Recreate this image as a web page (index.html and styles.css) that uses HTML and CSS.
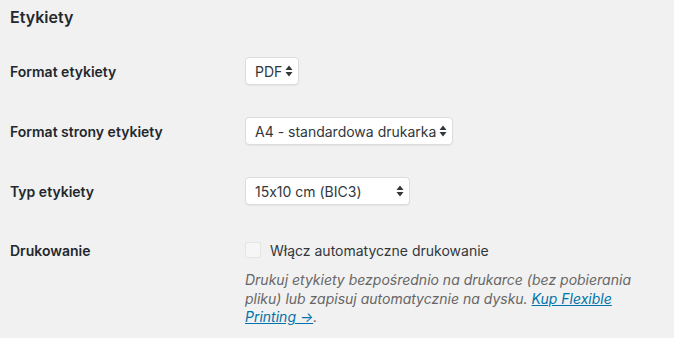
FILE: index.html
```html
<!DOCTYPE html>
<html lang="pl">
<head>
<meta charset="utf-8">
<link rel="stylesheet" href="styles.css">
</head>
<body>
<div class="page">
  <h2 class="title">Etykiety</h2>
  <div class="row">
    <div class="label">Format etykiety</div>
    <div class="field">
      <div class="select"><span>PDF</span>
        <svg class="arrows" width="8" height="12" viewBox="0 0 8 12"><path d="M4 0.5 L7.5 5 H0.5 Z M4 11.5 L7.5 7 H0.5 Z" fill="#32373c"/></svg>
      </div>
    </div>
  </div>
  <div class="row">
    <div class="label">Format strony etykiety</div>
    <div class="field">
      <div class="select"><span>A4 - standardowa drukarka</span>
        <svg class="arrows" width="8" height="12" viewBox="0 0 8 12"><path d="M4 0.5 L7.5 5 H0.5 Z M4 11.5 L7.5 7 H0.5 Z" fill="#32373c"/></svg>
      </div>
    </div>
  </div>
  <div class="row">
    <div class="label">Typ etykiety</div>
    <div class="field">
      <div class="select wide"><span>15x10 cm (BIC3)</span>
        <svg class="arrows" width="8" height="12" viewBox="0 0 8 12"><path d="M4 0.5 L7.5 5 H0.5 Z M4 11.5 L7.5 7 H0.5 Z" fill="#32373c"/></svg>
      </div>
    </div>
  </div>
  <div class="row row-top">
    <div class="label">Drukowanie</div>
    <div class="field">
      <label class="check"><span class="box"></span>Włącz automatyczne drukowanie</label>
      <p class="desc"><span>Drukuj etykiety bezpośrednio na drukarce (bez pobierania</span><br><span>pliku) lub zapisuj automatycznie na dysku.</span> <a href="#">Kup Flexible</a><br><a href="#">Printing →</a>.</p>
    </div>
  </div>
</div>
</body>
</html>
```

FILE: styles.css
```css
html, body {
  margin: 0;
  padding: 0;
  background: #f1f1f1;
}
body {
  font-family: Inter, "Noto Sans", sans-serif;
  font-size: 14px;
  color: #23282d;
  font-feature-settings: "calt" 0;
}
.page {
  padding-left: 10px;
}
.title {
  margin: 0;
  height: 41px;
  line-height: 35px;
  font-size: 16px;
  font-weight: 600;
}
.row {
  display: flex;
  align-items: center;
  height: 60px;
}
.label {
  width: 235px;
  flex: none;
  font-weight: 600;
}
.select {
  display: inline-flex;
  align-items: center;
  height: 26px;
  padding: 0 5px 0 9px;
  background: #fff;
  border: 1px solid #dcdcdc;
  border-radius: 4px;
  box-shadow: 0 1px 1px rgba(0,0,0,.05);
  color: #32373c;
  gap: 3px;
}
.select.wide {
  width: 149px;
  justify-content: space-between;
}
.arrows {
  display: block;
}
.row-top {
  align-items: flex-start;
  height: auto;
  padding-top: 20px;
}
.row-top .label {
  line-height: 20px;
}
.check {
  display: flex;
  align-items: center;
  height: 20px;
  margin-top: -1px;
  color: #32373c;
}
.box {
  width: 14px;
  height: 14px;
  border: 1px solid #e4e4e4;
  background: #f6f6f6;
  border-radius: 2px;
  margin-right: 9px;
}
.desc {
  margin: 11px 0 0;
  width: 420px;
  font-style: italic;
  color: #666;
  line-height: 18.6px;
}
.desc a {
  color: #0073aa;
}
```
